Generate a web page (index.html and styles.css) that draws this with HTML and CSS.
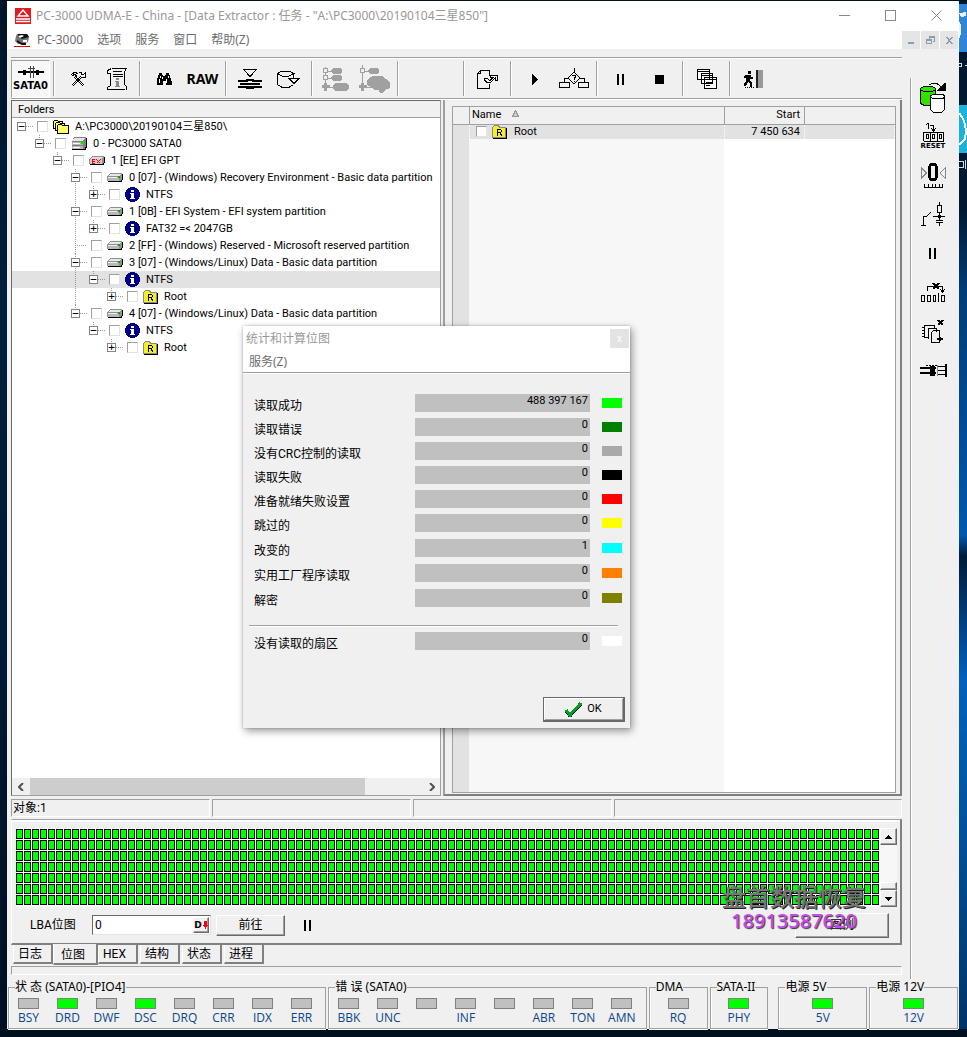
FILE: index.html
```html
<!DOCTYPE html>
<html lang="zh-CN">
<head>
<meta charset="utf-8">
<title>PC-3000 UDMA-E</title>
<link rel="stylesheet" href="styles.css">
</head>
<body>
<svg class="defs" aria-hidden="true">
  <symbol id="folders" viewBox="0 0 16 14"><path d="M.5 8.500V1.500l1-1h3l1 1h4v7z" fill="#ffff66" stroke="#000"/><path d="M2.500 10.500v-7l1-1h3l1 1h4v7z" fill="#ffff66" stroke="#000"/><path d="M4.500 13.500v-8l1-1h3l1 1h5.500v8z" fill="#ffff66" stroke="#000"/></symbol>
  <symbol id="drive-big" viewBox="0 0 16 13"><path d="M3 0h12v10l-2 2H1V4z" fill="#808080"/><path d="M3 1h11l-2 3H1z" fill="#e4e4e4"/><path d="M1 5h11v3H1zM1 9h11v3H1z" fill="#b4b4b4"/><path d="M2 6.500h7M2 10.500h7" stroke="#fff"/><path d="M1 12.500h13l1.500-3V1" fill="none" stroke="#000"/><path d="M10 5h3v2h-3z" fill="#0e0"/></symbol>
  <symbol id="drive" viewBox="0 0 16 9"><path d="M3 0h12v6l-2 2H0V3z" fill="#909090"/><path d="M3 1h11l-2 2H1z" fill="#e8e8e8"/><path d="M1 4h11v4H1z" fill="#b8b8b8"/><path d="M1 4.500h9" stroke="#eee"/><path d="M11 3h2v2h-2z" fill="#0a0"/><path d="M1 8.500h13l1.500-2V1" fill="none" stroke="#000"/></symbol>
  <symbol id="drive-ex" viewBox="0 0 16 9"><path d="M3 0h12v6l-2 2H0V3z" fill="#909090"/><path d="M3 1h11l-2 2H1z" fill="#ddd"/><path d="M1 3h12v5H1z" fill="#ccc"/><path d="M6 3.500H3v4h3M3 5.500h3M7.500 3.500l4 4M11.500 3.500l-4 4" fill="none" stroke="#f00"/><path d="M1 8.500h13l1.500-2V1" fill="none" stroke="#000"/></symbol>
  <symbol id="info" viewBox="0 0 15 15"><circle cx="7.500" cy="7.500" r="7.500" fill="#000084"/><path d="M6 3h3v2H6zM5 6h4v5h1v1H5v-1h1V7H5z" fill="#fff"/></symbol>
  <symbol id="root" viewBox="0 0 15 14"><path d="M1 13h14V3" fill="none" stroke="#000" stroke-width="2"/><path d="M.5 12.500v-10l2-2h4l1 2h6v10z" fill="#f4ee2a" stroke="#888"/><path d="M5.500 11V4.500h3l1 1v1l-1 1h-3M8 8l2 3" fill="none" stroke="#000"/></symbol>
  <symbol id="pause" viewBox="0 0 8 11"><path d="M0 0h2v11H0zM5 0h2v11H5z" fill="#000"/></symbol>
  <symbol id="up" viewBox="0 0 7 4"><path d="M0 4h7L3.500 0z" fill="#000"/></symbol>
</svg>
<div class="desktop">
  <div class="edge edge-left" aria-hidden="true"></div>
  <div class="window">
    <header class="titlebar">
      <svg class="logo" viewBox="0 0 16 16"><path d="M0 0h16v16H0z" fill="#e01b22"/><path d="M8 2L3 8h10zM1 11h14M1 13.500h14" fill="none" stroke="#fff" stroke-width="1.400"/></svg>
      <h1>PC-3000 UDMA-E - China - [Data Extractor : 任务 - "A:\PC3000\20190104三星850"]</h1>
      <div class="win-buttons">
        <button aria-label="最小化"><svg width="11" height="11"><path d="M0 5.500h11"/></svg></button>
        <button aria-label="最大化"><svg width="11" height="11"><path d="M.5.500h10v10H.5z"/></svg></button>
        <button aria-label="关闭"><svg class="smooth" width="11" height="11"><path d="M.5.500l10 10M10.500.500l-10 10"/></svg></button>
      </div>
    </header>
    <nav class="menubar">
      <svg class="doc-icon" viewBox="0 0 16 14"><path d="M3 1h10l2 3-1 5-5 2H4L1 8l1-5z" fill="#777"/><path d="M4 1h9l2 3-7 2-4-2z" fill="#111"/><path d="M4 3l4-1 2 1-4 2zM9 7h4v2H9z" fill="#fff"/><path d="M3 8l5 3h4" stroke="#111" fill="none" stroke-width="2"/><path d="M0 13.500h16" stroke="#e00000"/></svg>
      <button>PC-3000</button><button>选项</button><button>服务</button><button>窗口</button><button>帮助(Z)</button>
      <div class="mdi">
        <button aria-label="最小化子窗口"><svg width="9" height="9"><path d="M1 6h6v2H1z"/></svg></button>
        <button aria-label="还原子窗口"><svg width="9" height="9"><path d="M3 0h6v6H7V5h1V2H4v1H3zM0 3h6v5H0zM1 5v2h4V5z" fill-rule="evenodd"/></svg></button>
        <button aria-label="关闭子窗口"><svg width="9" height="9"><path d="M1 1h2l1.500 2L6 1h2L5.500 4.500 8 8H6L4.500 6 3 8H1l2.500-3.500z"/></svg></button>
      </div>
    </nav>

    <div class="body">
      <main class="main">
        <div class="toolbar" role="toolbar">
          <button class="pressed port"><svg width="26" height="12"><path d="M0 6h26M5 4.500h3M18 4.500h3M5 7.500h3M18 7.500h3" stroke="#000" stroke-width="2"/><path d="M12.500 0v12M15.500 0v12M10 2.500h7" stroke="#444"/></svg>SATA0</button>
          <i class="sep"></i>
          <button aria-label="工具"><svg width="16" height="16" class="line"><path d="M1 4l4-3 3 2M2 5l3-2 2 3M5 5l9 9M4 6l9 9M11 5L2 14M12 6l-9 9M9 1h3l-1 2 2 1 2-2v4h-4"/></svg></button>
          <button aria-label="信息"><svg width="22" height="22" class="line"><path d="M5.500.500h15l-2 3v13l2 2v3M5.500.500l-4 2v3h3v12l-3 2v2h17"/><path d="M7 3.500h9M7 6.500h10M7 8.500h10"/><path d="M10 10h3v2h-3zM9 13h4v5h1v1H9v-1h1v-4H9z" fill="#888" stroke="none"/></svg></button>
          <i class="sep"></i>
          <button aria-label="查找"><svg width="16" height="13"><path d="M3 0h3v2h1v1h2V2h1V0h3v2h1v3h1v3h1v4h-6V8H7v4H1V8h0V5h1V2h1z"/><path d="M4 3v2M12 3v2M3 6v4M10 6v4M6 4v2" stroke="#fff"/></svg></button>
          <button class="raw">RAW</button>
          <i class="sep"></i>
          <button aria-label="导入"><svg width="24" height="20" class="line"><path d="M5.500.500h13l-6.500 7z"/><path d="M0 12h10M14 12h10M2 15h20M0 18h10M14 18h10" stroke-width="2"/><path d="M8 10h8v2H8zM8 17h8v3H8z" fill="#000" stroke="none"/></svg></button>
          <button aria-label="导出"><svg width="23" height="18" class="line"><path d="M.5 3.500v11l4 2.500h8l4-2.500M.5 3.500L5 1h7l4.500 2.500L12 6H5zM16.500 3.500V8M12 8.500h10l-5 5z"/></svg></button>
          <i class="sep"></i>
          <button disabled aria-label="展开树"><svg width="28" height="28"><path d="M3.500 2v24M3 6h8M3 13h8M3 22h10" stroke="#a0a0a0"/><path d="M1.500 3.500h4v4h-4zM1.500 10.500h4v4h-4z" fill="#eee" stroke="#a0a0a0"/><path d="M2 18h3v2h3v3H5v3H2v-3H0v-3h2zM11 3h7l2 2v2l-2 2h-7L9 7V5zM11 10h7l2 2v2l-2 2h-7l-2-2v-2zM14 18h10l3 2v4l-3 2H14l-3-2v-4z" fill="#a0a0a0"/></svg></button>
          <button disabled aria-label="构建树"><svg width="32" height="29"><path d="M3.500 0v26M3 6h8M3 22h10" stroke="#a0a0a0"/><path d="M1.500 3.500h4v4h-4z" fill="#eee" stroke="#a0a0a0"/><path d="M2 18h3v2h3v3H5v3H2v-3H0v-3h2zM11 3h7l2 2v2l-2 2h-7L9 7V5zM11 12l4-1h8l4 3 4 3v6l-5 2-2 3h-3l-1-3h-5l-3-3-4-2v-4z" fill="#a0a0a0"/></svg></button>
          <i class="sep"></i><span class="blank"></span><i class="sep"></i>
          <button aria-label="打开任务"><svg width="22" height="19" class="line"><path d="M12.500 6V.500h-9l-3 3v15h12V14M.500 3.500h3v-3M7 9l3 4 4-1 4-4v2h2V5.500h-7v2h3l-3 3-3-2z"/></svg></button>
          <i class="sep"></i>
          <button aria-label="开始"><svg width="7" height="11"><path d="M1 0v11l6-5.500z"/></svg></button>
          <button aria-label="流程"><svg width="30" height="22" class="line"><path d="M15 0v4M15 4l6 6-6 6-6-6zM9 10H5v4M21 10h4v4M.500 14.500h10v5H.500zM19.500 14.500h10v5h-10zM13 8l1-1h2l1 1-2 3v1M15 13v1"/></svg></button>
          <i class="sep"></i>
          <button aria-label="暂停"><svg width="8" height="11"><use href="#pause"/></svg></button>
          <button aria-label="停止"><svg width="9" height="9"><path d="M0 0h9v9H0z"/></svg></button>
          <i class="sep"></i>
          <button aria-label="窗口"><svg width="20" height="20" class="line"><path d="M.5.500h12v10H.5zM.5 2h12M4.500 4.500h11v10h-11zM4.500 6h11M7.500 8.500h12v11h-12zM7.500 10h12M9 13.500h7M9 16.500h4" fill="#fff"/></svg></button>
          <i class="sep"></i>
          <button aria-label="退出"><svg width="19" height="18"><path d="M4 1h3v3H4zM2 5h5v2h2v2H6v2l2 2v4H6v-3l-2-2-2 4H0v-2l2-3V8H0V6z"/><path d="M12 0h2v18h-2z" fill="#222"/><path d="M14 0h5v18h-5z" fill="#999"/><path d="M1 17.500h9" stroke="#000" stroke-dasharray="1 1"/></svg></button>
        </div>

        <div class="panes">
          <section class="tree-pane">
            <h2>Folders</h2>
            <ul class="tree">
              <li><div class="row"><button class="exp">−</button><label><input type="checkbox"><svg width="16" height="14"><use href="#folders"/></svg><span>A:\PC3000\20190104三星850\</span></label></div>
              <ul><li><div class="row"><button class="exp">−</button><label><input type="checkbox"><svg width="16" height="13"><use href="#drive-big"/></svg><span>0 - PC3000 SATA0</span></label></div>
              <ul><li><div class="row"><button class="exp">−</button><label><input type="checkbox"><svg width="16" height="9"><use href="#drive-ex"/></svg><span>1 [EE] EFI GPT</span></label></div>
              <ul>
                <li><div class="row"><button class="exp">−</button><label><input type="checkbox"><svg width="16" height="9"><use href="#drive"/></svg><span>0 [07] - (Windows) Recovery Environment - Basic data partition</span></label></div>
                  <ul><li><div class="row"><button class="exp">+</button><label><input type="checkbox"><svg width="15" height="15"><use href="#info"/></svg><span>NTFS</span></label></div></li></ul></li>
                <li><div class="row"><button class="exp">−</button><label><input type="checkbox"><svg width="16" height="9"><use href="#drive"/></svg><span>1 [0B] - EFI System - EFI system partition</span></label></div>
                  <ul><li><div class="row"><button class="exp">+</button><label><input type="checkbox"><svg width="15" height="15"><use href="#info"/></svg><span>FAT32 =&lt; 2047GB</span></label></div></li></ul></li>
                <li><div class="row leaf"><label><input type="checkbox"><svg width="16" height="9"><use href="#drive"/></svg><span>2 [FF] - (Windows) Reserved - Microsoft reserved partition</span></label></div></li>
                <li><div class="row"><button class="exp">−</button><label><input type="checkbox"><svg width="16" height="9"><use href="#drive"/></svg><span>3 [07] - (Windows/Linux) Data - Basic data partition</span></label></div>
                  <ul><li><div class="row selected"><button class="exp">−</button><label><input type="checkbox"><svg width="15" height="15"><use href="#info"/></svg><span>NTFS</span></label></div>
                    <ul><li><div class="row"><button class="exp">+</button><label><input type="checkbox"><svg width="15" height="14"><use href="#root"/></svg><span>Root</span></label></div></li></ul></li></ul></li>
                <li><div class="row"><button class="exp">−</button><label><input type="checkbox"><svg width="16" height="9"><use href="#drive"/></svg><span>4 [07] - (Windows/Linux) Data - Basic data partition</span></label></div>
                  <ul><li><div class="row"><button class="exp">−</button><label><input type="checkbox"><svg width="15" height="15"><use href="#info"/></svg><span>NTFS</span></label></div>
                    <ul><li><div class="row"><button class="exp">+</button><label><input type="checkbox"><svg width="15" height="14"><use href="#root"/></svg><span>Root</span></label></div></li></ul></li></ul></li>
              </ul></li></ul></li></ul></li>
            </ul>
            <div class="hscroll">
              <button aria-label="向左滚动"><svg width="6" height="8"><path d="M5 0L1 4l4 4"/></svg></button>
              <div class="track"><div class="thumb"></div></div>
              <button aria-label="向右滚动"><svg width="6" height="8"><path d="M1 0l4 4-4 4"/></svg></button>
            </div>
          </section>

          <section class="list-pane">
            <div class="list">
              <table>
                <colgroup><col class="c-mark"><col class="c-name"><col class="c-start"><col></colgroup>
                <thead><tr><th></th><th>Name <svg class="sort" width="7" height="7"><path d="M.5 6.500h6L3.500.500z" fill="#ccc" stroke="#999"/></svg></th><th class="num">Start</th><th></th></tr></thead>
                <tbody><tr><td></td><td><label><input type="checkbox"><svg width="15" height="14"><use href="#root"/></svg><span>Root</span></label></td><td class="num">7 450 634</td><td></td></tr></tbody>
              </table>
              <div class="list-fill"><div></div><div></div></div>
            </div>
          </section>
        </div>

        <div class="statusbar"><span>对象:1</span><span></span><span></span><span></span></div>

        <section class="map-panel">
          <div class="map-row">
            <div class="map"></div>
            <div class="vscroll">
              <button aria-label="向上滚动"><svg width="7" height="4"><use href="#up"/></svg></button>
              <div class="vtrack"><div class="vthumb"></div></div>
              <button aria-label="向下滚动"><svg class="flip" width="7" height="4"><use href="#up"/></svg></button>
            </div>
          </div>
          <div class="map-controls">
            <label for="lba">LBA位图</label>
            <div class="lba"><input id="lba" type="text" value="0"><button aria-label="十进制">D<svg width="5" height="8"><path d="M1 0h3v4h1L2.500 8 0 4h1z" fill="#f00"/></svg></button></div>
            <button class="btn go">前往</button>
            <button class="flat" aria-label="暂停"><svg width="8" height="11"><use href="#pause"/></svg></button>
            <button class="btn legend-btn">图例</button>
          </div>
          <div class="watermark"><b>盘首数据恢复</b><em>18913587620</em></div>
        </section>

        <div class="tabs" role="tablist">
          <button role="tab">日志</button><button role="tab" class="active" aria-selected="true">位图</button><button role="tab">HEX</button><button role="tab">结构</button><button role="tab">状态</button><button role="tab">进程</button>
        </div>
        <div class="hint"></div>
      </main>

      <aside class="side">
        <div class="side-tools">
        <button aria-label="复制数据"><svg width="26" height="30" class="line"><path d="M.5 6.500v14l4 2h7l4-2v-14" fill="#33e000"/><ellipse cx="8" cy="6" rx="7.500" ry="2.500" fill="#33e000"/><path d="M10.500 13.500v13l3 3h8l3-3v-13" fill="#fff"/><ellipse cx="17.500" cy="13.500" rx="7" ry="2.500" fill="#fff"/><path d="M9 2l3-1.500h5L21 4"/><path d="M25 0v7h-7z" fill="#000"/></svg></button>
        <button aria-label="复位"><svg width="21" height="19" class="line"><path d="M3 2l2-1.500v5M7 2.500h3.500v5M8 5l2.500 3L13 5M.500 9.500h20M.500 18.500h20M.500 9v9M7 9v9M14 9v9M20.500 9v9M3 11.500h2v4H3zM9.500 11.500h2v4h-2zM16.500 11.500h2v4h-2z"/></svg><small>RESET</small></button>
        <button aria-label="归零"><svg width="25" height="27" class="line"><path d="M.500 6l5 5-5 5zM24 6l-5 5 5 5z" stroke="#888"/><rect x="8.500" y="2" width="7" height="16" rx="4" stroke-width="3"/><path d="M3.500 22v3.500h18V22M7.500 22v3M11.500 22v3M14.500 22v3M18.500 22v3"/></svg></button>
        <button aria-label="电源开关"><svg width="25" height="25" class="line"><path d="M0 23.500h5M2.500 23v-9H6l4-4M12 14.500h12M18.500 0v3M16.500 3.500h4v7h-4zM18.500 11v7M15 18.500h7M15 20.500h7M18.500 21v3"/><circle cx="18.500" cy="14.500" r="1" fill="#000"/></svg></button>
        <button aria-label="暂停"><svg width="8" height="11"><use href="#pause"/></svg></button>
        <button aria-label="跳过"><svg width="24" height="20" class="line"><path d="M6.500 8V3.500h15V8M19 6l2.500 3L24 6M.500 12.500h3v6h-3zM6.500 12.500h3v6h-3zM12.500 12.500h2v6h-2zM17.500 10v9M20.500 12.500h3v6h-3z"/><path d="M12 0l6 6M18 0l-6 6" stroke-width="2"/></svg></button>
        <button aria-label="删除副本"><svg width="22" height="24" class="line"><path d="M3 5.500h9v3M2.500 5v12h4M0 7.500h3M0 10.500h3M0 13.500h3M0 16.500h3M6.500 19V8.500h8v3M10 22.500h7.500v-12h-6l-2 2v10z"/><path d="M16 0l5 5M21 0l-5 5" stroke-width="2"/><path d="M15 19h6M18 17v4" stroke-width="2"/></svg></button>
        <button aria-label="连接"><svg width="27" height="13" class="line"><path d="M0 4h16M0 9h16" stroke-width="2"/><path d="M10 2h4v9h-4z" fill="#000"/><path d="M6 1.500h11" stroke-dasharray="2 1"/><path d="M17 2.500h8M17 6.500h8M17 10.500h8"/><path d="M26 0v13" stroke-width="2"/><path d="M17.500 1v11" stroke="#888"/></svg></button>
        </div>
      </aside>
    </div>

    <footer class="leds">
      <fieldset class="g-state"><legend>状 态 (SATA0)-[PIO4]</legend><div><span><i></i>BSY</span><span><i class="on"></i>DRD</span><span><i></i>DWF</span><span><i class="on"></i>DSC</span><span><i></i>DRQ</span><span><i></i>CRR</span><span><i></i>IDX</span><span><i></i>ERR</span></div></fieldset>
      <fieldset class="g-state"><legend>错 误 (SATA0)</legend><div><span><i></i>BBK</span><span><i></i>UNC</span><span><i></i></span><span><i></i>INF</span><span><i></i></span><span><i></i>ABR</span><span><i></i>TON</span><span><i></i>AMN</span></div></fieldset>
      <fieldset class="g-one"><legend>DMA</legend><div><span><i></i>RQ</span></div></fieldset>
      <fieldset class="g-one"><legend>SATA-II</legend><div><span><i class="on"></i>PHY</span></div></fieldset>
      <fieldset class="g-power first"><legend>电源 5V</legend><div><span><i class="on"></i>5V</span></div></fieldset>
      <fieldset class="g-power"><legend>电源 12V</legend><div><span><i class="on"></i>12V</span></div></fieldset>
    </footer>

    <div class="dialog" role="dialog" aria-labelledby="dlg-title">
      <div class="dlg-title"><h2 id="dlg-title">统计和计算位图</h2><button aria-label="关闭">x</button></div>
      <div class="dlg-menu"><button>服务(Z)</button></div>
      <dl class="stats">
        <div><dt>读取成功</dt><dd>488 397 167</dd><i class="sw lime"></i></div>
        <div><dt>读取错误</dt><dd>0</dd><i class="sw green"></i></div>
        <div><dt>没有CRC控制的读取</dt><dd>0</dd><i class="sw gray"></i></div>
        <div><dt>读取失败</dt><dd>0</dd><i class="sw black"></i></div>
        <div><dt>准备就绪失败设置</dt><dd>0</dd><i class="sw red"></i></div>
        <div><dt>跳过的</dt><dd>0</dd><i class="sw yellow"></i></div>
        <div><dt>改变的</dt><dd>1</dd><i class="sw cyan"></i></div>
        <div><dt>实用工厂程序读取</dt><dd>0</dd><i class="sw orange"></i></div>
        <div><dt>解密</dt><dd>0</dd><i class="sw olive"></i></div>
      </dl>
      <hr>
      <dl class="stats rest">
        <div><dt>没有读取的扇区</dt><dd>0</dd><i class="sw white"></i></div>
      </dl>
      <div class="dlg-actions"><button class="ok"><svg width="17" height="15"><path d="M1 9l4 5L16 2" fill="none" stroke="#000080" stroke-width="3"/><path d="M1 8l4 5L16 1" fill="none" stroke="#00a018" stroke-width="3"/></svg>OK</button></div>
    </div>
  </div>
  <div class="edge edge-right" aria-hidden="true">
    <svg width="8" height="240"><path d="M0 3h8v48H0z" fill="#2f86d6"/><path d="M0 12l7-1v4L2 16zM0 20q5 8 0 18" fill="#e8f2fc"/><path d="M0 104h8v48H0z" fill="#18b4dc"/><path d="M0 112q9 10 6 26L0 144" fill="none" stroke="#fff" stroke-width="2"/><path d="M0 62h2v3H0M6 64h2M0 160h4v6H0M6 159v9" stroke="#ddd" fill="none"/></svg>
  </div>
</div>
</body>
</html>
```
FILE: styles.css
```css
* { box-sizing: border-box; }
body {
  margin: 0;
  background: #00101f;
  font: 12px/16px Roboto, "Noto Sans CJK SC", sans-serif;
  color: #000;
}
button, input { font: inherit; color: inherit; }
button { border: 0; padding: 0; background: none; }
h1, h2, ul, dl, dd { margin: 0; padding: 0; }
ul { list-style: none; }
svg { display: block; flex: none; shape-rendering: crispEdges; }
.defs { position: absolute; width: 0; height: 0; }
.smooth, .logo, .doc-icon { shape-rendering: auto; }
.line { fill: none; stroke: #000; }

.desktop {
  display: grid;
  grid-template-columns: 7px minmax(0, 1fr) 8px;
  min-height: 100vh;
  padding: 1px 0 8px;
}
.edge-left { background: linear-gradient(#001428, #001e3c 30%, #001a34 60%, #000f22); }
.edge-right { background: linear-gradient(#001830 0 20%, #003c78 28%, #0058b0 52%, #001c3a 54%, #0060c0 66%, #0058a8 76%, #003468); }
.window {
  position: relative;
  display: flex;
  flex-direction: column;
  background: #f0f0f0;
}

/* title and menu */
.titlebar, .menubar { display: flex; align-items: center; background: #fff; font-family: "Noto Sans", "Noto Sans CJK SC", sans-serif; }
.titlebar { height: 29px; padding-left: 8px; color: #999; }
.titlebar h1 { flex: 1; font-size: 12px; font-weight: 400; padding-left: 5px; white-space: nowrap; }
.logo { width: 16px; height: 16px; }
.win-buttons { display: flex; }
.win-buttons button { width: 46px; height: 28px; display: grid; place-items: center; }
.win-buttons path { fill: none; stroke: #888; }
.menubar { height: 19px; padding: 1px 1px 0 7px; color: #6d6d6d; }
.menubar > button { margin-right: 14px; white-space: nowrap; }
.doc-icon { width: 16px; height: 14px; margin-right: 7px; }
.mdi { display: flex; gap: 1px; margin-left: auto; }
.mdi button { width: 18px; height: 18px; background: #e5e5e5; display: grid; place-items: center; }
.mdi svg { fill: #8d9cad; }

.body { flex: 1; display: flex; min-height: 0; }
.main { flex: 1; min-width: 0; display: flex; flex-direction: column; padding: 8px 0 4px 4px; }

.toolbar {
  display: flex;
  height: 42px;
  border-top: 1px solid #a0a0a0;
  border-bottom: 1px solid #a0a0a0;
  box-shadow: inset 0 1px #fff, 0 1px #fff;
  padding-top: 2px;
}
.toolbar button { width: 39px; height: 38px; display: flex; align-items: center; justify-content: center; }
.toolbar .port { flex-direction: column; gap: 2px; font: bold 10px/12px "DejaVu Sans", sans-serif; border: 1px solid #a0a0a0; border-right-color: #fff; border-bottom-color: #fff; background: #f7f7f7; }
.toolbar .raw { font: bold 14px/16px "Noto Sans", sans-serif; }
.sep { width: 8px; height: 35px; margin-top: 1px; background: linear-gradient(90deg, transparent 3px, #a0a0a0 3px 4px, #fff 4px 5px, transparent 5px); }
.blank { width: 58px; }

/* panes */
.panes { flex: 1; display: flex; min-height: 0; padding-top: 1px; }
.tree-pane {
  flex: 428 1 0;
  min-width: 0;
  display: flex;
  flex-direction: column;
  border: 1px solid #696969;
  border-right-color: #a0a0a0;
  border-bottom-color: #a0a0a0;
  background: #fff;
  font-size: 11px;
}
.tree-pane h2 { font-size: 11px; font-weight: 400; line-height: 16px; height: 17px; padding: 1px 6px 0; background: #f0f0f0; border-bottom: 1px solid #a0a0a0; }
.tree { flex: 1; padding-left: 5px; overflow: hidden; isolation: isolate; white-space: nowrap; }
.tree ul { padding-left: 18px; }
.tree li {
  background: repeating-linear-gradient(#999 0 1px, transparent 1px 2px) 4px 0 / 1px 100% no-repeat;
}
.tree li:last-child { background-size: 1px 8px; }
.tree > li:last-child { background: none; }
.row { position: relative; display: flex; align-items: center; height: 17px; }
.row::before { content: ""; width: 7px; height: 1px; order: 1; background: repeating-linear-gradient(90deg, #999 0 1px, transparent 1px 2px); }
.row label { order: 2; }
.row.leaf::before { width: 12px; margin-left: 4px; }
.row.selected::after { content: ""; position: absolute; z-index: -1; inset: 0 0 0 -120px; background: #e2e2e2; }
.row label, td label { display: flex; align-items: center; }
.row label { padding-left: 4px; }
.row svg + span { padding-left: 6px; }
.exp { width: 9px; height: 9px; border: 1px solid #848484; background: #fff; font: 11px/7px "DejaVu Sans Mono", monospace; display: grid; place-items: center; }
input[type="checkbox"] {
  appearance: none;
  flex: none;
  width: 11px;
  height: 11px;
  margin: 0 5px 0 0;
  background: #fff;
  border: 1px solid #a0a0a0;
  border-right-color: #e3e3e3;
  border-bottom-color: #e3e3e3;
}
.hscroll { display: flex; height: 17px; background: #f0f0f0; }
.hscroll button { width: 17px; display: grid; place-items: center; }
.hscroll path { fill: none; stroke: #505050; stroke-width: 2; }
.hscroll svg { shape-rendering: auto; }
.track { flex: 1; }
.thumb { width: 85%; height: 17px; margin-left: 1px; background: #cdcdcd; }

.list-pane { flex: 443 1 0; min-width: 0; display: flex; padding: 6px 4px 1px 7px; border-left: 2px solid #a0a0a0; border-right: 2px solid #808080; border-bottom: 2px solid #808080; margin-left: 2px; }
.list { flex: 1; display: flex; flex-direction: column; min-width: 0; border: 1px solid #a0a0a0; background: #fff; }
table { width: 100%; border-collapse: collapse; table-layout: fixed; font-size: 11px; }
.c-mark { width: 16px; }
.c-name { width: 255px; }
.c-start { width: 80px; }
th, td { padding: 0; text-align: left; font-weight: 400; }
th { height: 17px; line-height: 16px; background: #f0f0f0; border-bottom: 1px solid #a0a0a0; border-right: 1px solid #a0a0a0; padding-left: 2px; }
th:last-child { border-right: 0; }
td { height: 15px; line-height: 14px; background: #e2e2e2; border-right: 1px dotted #fff; padding-left: 6px; }
td svg + span { padding-left: 7px; }
th.num, td.num { text-align: right; padding-right: 4px; }
.sort { display: inline-block; margin-left: 8px; vertical-align: 1px; }
.list-fill { flex: 1; display: grid; grid-template-columns: 16px 255px 1fr; }
.list-fill div:first-child { background: #e2e2e2; }
.list-fill div + div { background: #f7f7f7; }

.statusbar { display: flex; gap: 2px; height: 18px; margin: 3px 0 2px; }
.statusbar span { flex: 198 1 0; border: 1px solid #a0a0a0; border-right-color: #fff; border-bottom-color: #fff; padding-left: 1px; line-height: 16px; }
.statusbar span:last-child { flex-grow: 288; }

/* bitmap */
.map-panel {
  position: relative;
  border-top: 1px solid #a0a0a0;
  border-right: 2px solid #808080;
  border-bottom: 2px solid #808080;
  border-left: 1px solid #fff;
  padding: 8px 3px 0 4px;
  box-shadow: inset 0 2px #fff;
}
.map-row { display: flex; height: 79px; background: #fff; }
.map {
  flex: 1;
  height: 77px;
  margin-top: 1px;
  background:
    repeating-linear-gradient(90deg, transparent 0 7px, #fff 7px 8px),
    repeating-linear-gradient(transparent 0 10px, #fff 10px 11px),
    repeating-linear-gradient(90deg, #000 0 1px, transparent 1px 6px, #000 6px 8px),
    repeating-linear-gradient(#000 0 1px, transparent 1px 9px, #000 9px 11px),
    #0f0;
}
.vscroll { width: 17px; display: flex; flex-direction: column; }
.vscroll button, .vthumb, .btn, .lba button {
  background: #f0f0f0;
  border: 1px solid #fff;
  border-right-color: #696969;
  border-bottom-color: #696969;
  box-shadow: inset -1px -1px #a0a0a0;
}
.vscroll button { height: 17px; display: grid; place-items: center; }
.vtrack { flex: 1; background: #f7f7f7; display: flex; align-items: flex-end; }
.vthumb { width: 17px; height: 8px; }
.flip { transform: rotate(180deg); }
.map-controls { display: flex; align-items: center; height: 36px; padding: 0 8px 0 14px; }
.map-controls label { width: 62px; }
.lba { display: flex; width: 119px; height: 20px; padding: 1px; background: #fff; border: 1px solid #696969; border-right-color: #e3e3e3; border-bottom-color: #e3e3e3; }
.lba input { flex: 1; min-width: 0; border: 0; padding: 0 1px; outline: 0; background: #fff; }
.lba button { width: 16px; display: flex; align-items: center; justify-content: center; gap: 1px; font: bold 9px/12px "DejaVu Sans", sans-serif; }
.go { width: 69px; height: 21px; margin-left: 5px; }
.flat { margin-left: 19px; }
.legend-btn { width: 94px; height: 25px; margin-left: auto; }
.watermark {
  position: absolute;
  right: 34px;
  bottom: 10px;
  display: flex;
  flex-direction: column;
  align-items: center;
  font: 24px/26px "Noto Sans CJK SC", sans-serif;
}
.watermark b { color: #777; text-shadow: 1px 1px #222; font-weight: 500; }
.watermark em { font: 500 20px/24px "Noto Sans", sans-serif; color: #c44cf0; text-shadow: 1px 1px 1px #333; }

.tabs { display: flex; align-items: flex-start; height: 21px; padding-left: 2px; }
.tabs button { width: 40px; height: 19px; margin-right: 2px; text-align: left; padding: 2px 0 0 4px; line-height: 15px; border: 1px solid #fff; border-top: 0; border-right: 2px solid #808080; border-bottom: 2px solid #808080; }
.tabs .active { width: 45px; height: 21px; margin: -1px 0 0 -2px; padding: 4px 0 0 7px; background: #f0f0f0; position: relative; }
.hint { height: 9px; border: 1px solid #a0a0a0; border-right-color: #fff; border-bottom-color: #fff; }

/* side tools */
.side { width: 57px; padding-top: 29px; display: flex; }
.side-tools { flex: 1; margin-left: 8px; padding-right: 4px; border-left: 1px solid #a0a0a0; box-shadow: inset 1px 0 #fff; display: flex; flex-direction: column; }
.side-tools button { height: 39px; display: flex; flex-direction: column; align-items: center; justify-content: center; }
.side-tools small { font: bold 7px/8px "DejaVu Sans", sans-serif; }

/* indicators */
.leds { display: flex; height: 50px; padding: 0 1px; gap: 2px; font: 12px/16px "Open Sans", "Noto Sans CJK SC", sans-serif; }
fieldset { min-width: 0; margin: 0; padding: 0; border: 1px solid #a0a0a0; box-shadow: inset 1px 0 #fff, 0 1px #fff; flex: 57 1 0; }
legend { margin-left: 6px; padding: 0; font-family: "Noto Sans", "Noto Sans CJK SC", sans-serif; line-height: 16px; white-space: nowrap; }
.g-state { flex-grow: 317; }
.g-power { flex-grow: 87; }
.g-power.first { margin-left: 8px; }
fieldset div { display: flex; justify-content: center; padding-top: 3px; }
.g-state div { justify-content: flex-start; }
.leds span { width: 39px; display: flex; flex-direction: column; align-items: center; color: #0a468c; line-height: 18px; }
.leds i { width: 21px; height: 11px; border: 1px solid #808080; background: #c0c0c0; }
.leds i.on { background: #0f0; }

/* statistics dialog */
.dialog {
  position: absolute;
  left: 236px;
  top: 325px;
  width: 387px;
  background: #f0f0f0;
  box-shadow: 2px 3px 8px rgba(0, 0, 0, .4), 0 0 2px rgba(0, 0, 0, .25);
}
.dlg-title { display: flex; justify-content: space-between; align-items: center; height: 25px; padding: 0 1px 0 3px; background: #fff; }
.dlg-title h2 { font-size: 12px; font-weight: 400; color: #999; }
.dlg-title button { width: 19px; height: 19px; background: #e3e3e3; color: #fff; font-size: 10px; line-height: 18px; }
.dlg-menu { height: 22px; padding-left: 6px; background: #fff; color: #6d6d6d; border-bottom: 1px solid #a0a0a0; box-shadow: 0 1px #fff; font-family: "Noto Sans", "Noto Sans CJK SC", sans-serif; }
.dlg-menu button { line-height: 21px; }
.stats { display: flex; flex-direction: column; gap: 6px; padding: 21px 8px 0 11px; }
.stats div { display: flex; align-items: center; height: 18px; }
.stats div:nth-child(n+7) { margin-top: 1px; }
.stats dt { flex: 1; padding-top: 6px; }
.stats dd { width: 175px; height: 18px; padding-right: 2px; background: #c0c0c0; text-align: right; font-size: 11px; line-height: 14px; }
.sw { width: 20px; height: 10px; margin-left: 12px; }
.dialog hr { margin: 18px 12px 0 6px; border: 0; border-top: 1px solid #a0a0a0; border-bottom: 1px solid #fff; }
.stats.rest { padding-top: 5px; }
.lime { background: #0f0; } .green { background: #008000; } .gray { background: #a9a9a9; }
.black { background: #000; } .red { background: #f00; } .yellow { background: #ff0; }
.cyan { background: #0ff; } .orange { background: #ff8000; } .olive { background: #808000; } .white { background: #fff; }
.dlg-actions { display: flex; justify-content: flex-end; padding: 47px 5px 6px; }
.ok { display: flex; align-items: center; justify-content: center; gap: 5px; width: 82px; height: 25px; font-size: 11px; border: 1px solid #696969; border-right-width: 2px; border-bottom-width: 2px; box-shadow: inset 1px 1px #fff, inset -1px -1px #a0a0a0; }
```
